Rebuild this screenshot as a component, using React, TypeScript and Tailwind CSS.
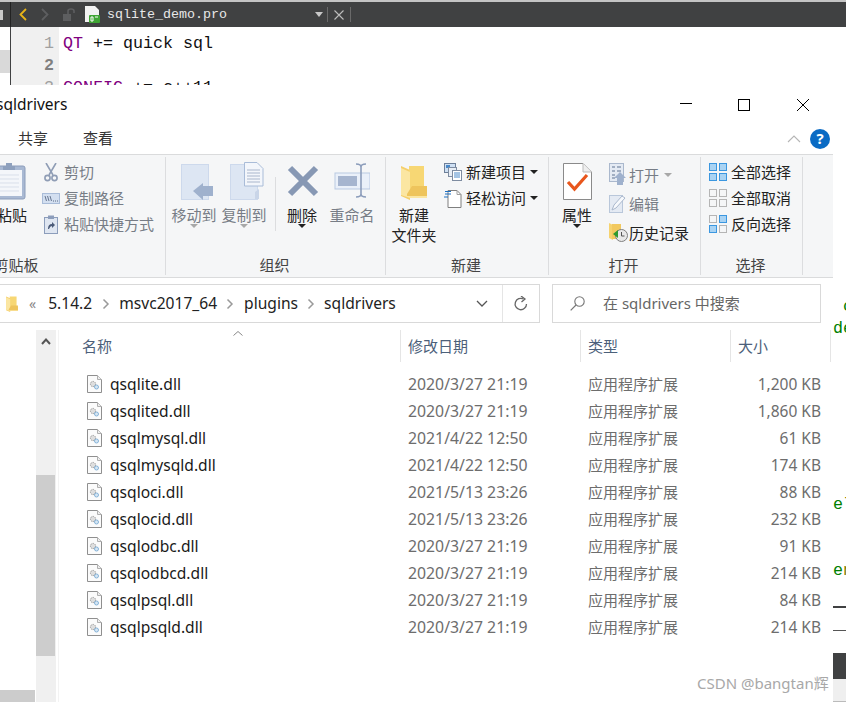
import React from "react";

const UI = "font-['Noto_Sans','Noto_Sans_CJK_SC',sans-serif]";
const MONO = "font-['Liberation_Mono','DejaVu_Sans_Mono',monospace]";

const Folder = ({ w = 26, h = 35 }: { w?: number; h?: number }) => (
  <svg width={w} height={h} viewBox="0 0 26 35">
    <path d="M0 1 L9 5 V35 L0 31Z" fill="#f5cf6b" />
    <path d="M8 1 H23 V24 H26 V32 H8Z" fill="#f7d774" />
    <path d="M0 3 L9 7 V31 H26 V33 H9 L0 30Z" fill="#fbe6a2" />
    <path d="M6 29 L11 21 H26 V31 H6Z" fill="#eec45c" />
  </svg>
);

const Clipboard = () => (
  <svg width="34" height="38" viewBox="0 0 34 38" className="mr-[6px]">
    <rect x="1" y="4" width="32" height="33" rx="2" fill="#a9b9d3" stroke="#8c9dbb" />
    <rect x="4" y="8" width="26" height="26" fill="#f4f6fa" />
    <path d="M7 13H27M7 17H27M7 21H27M7 25H27M7 29H27" stroke="#d9dfea" />
    <path d="M11 8 V4 H14 V1 H20 V4 H23 V8Z" fill="#8ea0bd" />
  </svg>
);

const Scissors = () => (
  <svg width="14" height="19" viewBox="0 0 14 19" fill="none" stroke="#8f9db5" strokeWidth="1.6" className="ml-[2px]">
    <path d="M2 0 L9 12 M12 0 L5 12" />
    <circle cx="3.5" cy="15" r="2.6" />
    <circle cx="10.5" cy="15" r="2.6" />
  </svg>
);

const PathIcon = () => (
  <svg width="18" height="11" viewBox="0 0 18 11">
    <rect x="0.5" y="0.5" width="17" height="10" fill="#d3dff0" stroke="#a9bcd8" />
    <path d="M3 3 L4.5 8 M5.5 3 L7 8 M8 3 L9.5 8" stroke="#5a6a84" strokeWidth="0.9" />
    <path d="M11 8H12M13 8H14M15 8H16" stroke="#5a6a84" />
  </svg>
);

const ShortcutIcon = () => (
  <svg width="14" height="19" viewBox="0 0 14 19" className="ml-[2px]">
    <rect x="0.5" y="2.5" width="13" height="16" fill="#dfe6f1" stroke="#8c9dbb" />
    <path d="M4 0.5H10V4H4Z" fill="#8c9dbb" />
    <path d="M4 14 Q4 9 8 9 V7 L11 10 L8 13 V11 Q6 11 5 14Z" fill="#4a5a78" />
  </svg>
);

const MoveIcon = () => (
  <svg width="32" height="36" viewBox="0 0 32 36" className="ml-[6px]">
    <rect x="0.5" y="0.5" width="27" height="35" fill="#dde6f3" stroke="#cdd9ec" />
    <path d="M12 27 L22 19 V22 H32 V32 H22 V36Z" fill="#9fb1cd" />
  </svg>
);

const CopyIcon = () => (
  <svg width="34" height="38" viewBox="0 0 34 38" className="ml-[6px]">
    <rect x="0.5" y="2.5" width="27" height="35" fill="#dde6f3" stroke="#cdd9ec" />
    <path d="M14.5 0.5 H27 L33 6.5 V24 H14.5Z" fill="#f3f6fb" stroke="#a9bcd8" />
    <path d="M17 8H30M17 11H30M17 14H30M17 17H30M17 20H30" stroke="#a9b6cc" />
    <path d="M25 30 V37 H29 V27Z" fill="#c9d5e8" />
  </svg>
);

const DeleteIcon = () => (
  <svg width="32" height="32" viewBox="0 0 32 32" className="mb-[3px] ml-[2px]">
    <path d="M3 3 L29 29 M29 3 L3 29" stroke="#8798b4" strokeWidth="6" />
  </svg>
);

const RenameIcon = () => (
  <svg width="36" height="35" viewBox="0 0 36 35" className="mb-[2px]">
    <rect x="1" y="10" width="35" height="16" fill="#eaf0f9" stroke="#b9c9e2" />
    <rect x="4" y="13" width="19" height="10" fill="#a6b5cf" />
    <path d="M22 1 Q27 1 27 4 V31 Q27 34 32 34 M32 1 Q27 1 27 4 M27 31 Q27 34 22 34" stroke="#8c9dbb" strokeWidth="1.6" fill="none" />
  </svg>
);

const NewItemIcon = () => (
  <svg width="18" height="18" viewBox="0 0 18 18">
    <rect x="0.5" y="0.5" width="11" height="9" fill="#cfe0f3" stroke="#6d7f99" />
    <rect x="2" y="2" width="4" height="3" fill="#4a89c9" />
    <rect x="4.5" y="4.5" width="8" height="9" fill="#e8eef6" stroke="#7e8ca1" />
    <rect x="8.5" y="7.5" width="9" height="10" fill="#fff" stroke="#7e8ca1" />
    <path d="M10 10H16M10 12H16M10 14H16" stroke="#4a89c9" />
  </svg>
);

const EasyIcon = () => (
  <svg width="18" height="19" viewBox="0 0 18 19">
    <path d="M4 1.5 H13 L17 5.5 V18.5 H4Z" fill="#fff" stroke="#7f7f7f" />
    <path d="M13 1.5 V5.5 H17" fill="none" stroke="#a0a0a0" />
    <path d="M0 8H4M1 5H7M1 2.5H7" stroke="#1b6fc2" strokeWidth="1.2" />
  </svg>
);

const PropsIcon = () => (
  <svg width="29" height="37" viewBox="0 0 29 37">
    <path d="M0.5 0.5 H20 L28.5 9 V36.5 H0.5Z" fill="#fff" stroke="#8a8a8a" />
    <path d="M20 0.5 V9 H28.5" fill="#eee" stroke="#bbb" />
    <path d="M5 19 L11.5 26 L24 12" fill="none" stroke="#e8561c" strokeWidth="3.2" />
  </svg>
);

const OpenIcon = () => (
  <svg width="17" height="23" viewBox="0 0 17 23">
    <rect x="0.5" y="0.5" width="14" height="18" fill="#e4eaf3" stroke="#aab8cd" />
    <path d="M3 4H6M8 4H12M3 8H6M8 8H12M3 12H6M3 15H6" stroke="#8b9ab2" strokeWidth="1.6" />
    <path d="M11 9 L17 15 H14 V22 H8 V15 H5Z" fill="#9fb1cd" />
  </svg>
);

const EditIcon = () => (
  <svg width="17" height="18" viewBox="0 0 17 18">
    <rect x="0.5" y="0.5" width="13" height="17" fill="#e4eaf3" stroke="#b9c7da" />
    <path d="M3 15 L5 10 L13 1 L16 3 L7 13Z" fill="#f7f9fc" stroke="#aab8cd" />
  </svg>
);

const HistoryIcon = () => (
  <svg width="19" height="19" viewBox="0 0 19 19">
    <path d="M0 0 L4 2 V17 L0 15Z" fill="#f6d36f" />
    <path d="M3 1H12V8H17V16H3Z" fill="#f2c95f" />
    <circle cx="12.5" cy="12.5" r="6" fill="#e8e8e8" stroke="#7f7f7f" />
    <path d="M12.5 9V13H15.5" stroke="#555" fill="none" />
    <path d="M4 11 L9 7 V15Z" fill="#2f9a2f" />
  </svg>
);

const SelectIcon = ({ on }: { on: boolean[] }) => (
  <div className="grid h-[18px] w-[18px] grid-cols-2 gap-[2px]">
    {on.map((v, i) => (
      <div key={i} className={v ? "border border-[#3b97e0] bg-[#a9d3f3]" : "border border-[#b5b5b5] bg-[#f5f6f7]"} />
    ))}
  </div>
);

const Caret = ({ light }: { light?: boolean }) => (
  <svg width="8" height="4" viewBox="0 0 8 4">
    <path d="M0 0H8L4 4Z" fill={light ? "#a8a8a8" : "#222"} />
  </svg>
);

const Big = ({
  icon, lines, w, dim, caret, className = "",
}: {
  icon: React.ReactNode; lines: string[]; w: number; dim?: boolean; caret?: "dark" | "light"; className?: string;
}) => (
  <div className={`flex flex-col items-center ${className}`} style={{ width: w }}>
    <div className="flex h-[48px] items-end justify-center pb-[5px]">{icon}</div>
    {lines.map((l) => (
      <div key={l} className={`h-[20px] whitespace-nowrap text-[15px] leading-[20px] ${dim ? "text-[#777d86]" : "text-[#222]"}`}>{l}</div>
    ))}
    {caret && <div className="mt-[-1px]"><Caret light={caret === "light"} /></div>}
  </div>
);

const Small = ({
  icon, text, dim, caret, h = 26, iw = 22, cm = "ml-[4px]",
}: { icon: React.ReactNode; text: string; dim?: boolean; caret?: "dark" | "light"; h?: number; iw?: number; cm?: string }) => (
  <div className="flex items-center" style={{ height: h }}>
    <div className="flex shrink-0 justify-start" style={{ width: iw }}>{icon}</div>
    <span className={`whitespace-nowrap text-[15px] leading-[20px] ${dim ? "text-[#777d86]" : "text-[#222]"}`}>{text}</span>
    {caret && <div className={cm}><Caret light={caret === "light"} /></div>}
  </div>
);

const Group = ({ w, label, children, labelClass = "" }: { w: number; label: string; children: React.ReactNode; labelClass?: string }) => (
  <div className="flex h-[118px] shrink-0 flex-col border-r border-[#dcdddf]" style={{ width: w }}>
    <div className="flex flex-1">{children}</div>
    <div className={`h-[24px] pr-[2px] text-center text-[15px] leading-[28px] whitespace-nowrap text-[#444] ${labelClass}`}>{label}</div>
  </div>
);

const DllIcon = () => (
  <svg width="15" height="18" viewBox="0 0 15 18">
    <path d="M0.5 0.5 H10.5 L14.5 4.5 V17.5 H0.5Z" fill="#fbfbfb" stroke="#8f8f8f" />
    <path d="M10.5 0.5 V4.5 H14.5" fill="#eee" stroke="#b0b0b0" />
    <circle cx="6" cy="9" r="2.6" fill="#dedede" stroke="#9c9c9c" strokeDasharray="1.5 0.8" />
    <circle cx="9.5" cy="12" r="2" fill="#d6e6f3" stroke="#86b3d8" />
  </svg>
);

const files: [string, string, string][] = [
  ["qsqlite.dll", "2020/3/27 21:19", "1,200 KB"],
  ["qsqlited.dll", "2020/3/27 21:19", "1,860 KB"],
  ["qsqlmysql.dll", "2021/4/22 12:50", "61 KB"],
  ["qsqlmysqld.dll", "2021/4/22 12:50", "174 KB"],
  ["qsqloci.dll", "2021/5/13 23:26", "88 KB"],
  ["qsqlocid.dll", "2021/5/13 23:26", "232 KB"],
  ["qsqlodbc.dll", "2020/3/27 21:19", "91 KB"],
  ["qsqlodbcd.dll", "2020/3/27 21:19", "214 KB"],
  ["qsqlpsql.dll", "2020/3/27 21:19", "84 KB"],
  ["qsqlpsqld.dll", "2020/3/27 21:19", "214 KB"],
];

const Chev = () => (
  <svg width="8" height="12" viewBox="0 0 8 12" className="shrink-0">
    <path d="M1.5 1.5 L6 6 L1.5 10.5" fill="none" stroke="#9a9a9a" strokeWidth="1.5" />
  </svg>
);

const Head = ({ w, label }: { w: number; label: string }) => (
  <div className="flex h-[32px] shrink-0 items-center border-r border-[#e5e5e5] pl-[7px] text-[15px] text-[#4c607a]" style={{ width: w }}>
    {label}
  </div>
);

export default function App() {
  return (
    <div className={`flex h-[702px] w-[846px] flex-col overflow-hidden bg-white ${UI}`}>
      {/* Qt Creator behind */}
      <div className="h-[2px] shrink-0 bg-[#c4c4c4]" />
      <div className="flex h-[25px] shrink-0 items-center bg-[#404142]">
        <div className="h-[10px] w-[3px] bg-[#c8c8c8]" />
        <div className="ml-[7px] h-full w-px bg-[#222]" />
        <svg width="8" height="13" viewBox="0 0 8 13" className="ml-[8px]"><path d="M7 1 L1.5 6.5 L7 12" fill="none" stroke="#e8b418" strokeWidth="1.8" /></svg>
        <svg width="8" height="13" viewBox="0 0 8 13" className="ml-[14px]"><path d="M1 1 L6.5 6.5 L1 12" fill="none" stroke="#5d5e60" strokeWidth="1.8" /></svg>
        <svg width="13" height="13" viewBox="0 0 13 13" className="ml-[14px]"><rect x="0" y="6" width="8" height="7" fill="#5d5e60" /><path d="M5 6 V3 Q5 1 8 1 Q11 1 11 3 V5" fill="none" stroke="#5d5e60" strokeWidth="1.6" /></svg>
        <svg width="15" height="17" viewBox="0 0 15 17" className="ml-[9px]"><path d="M0 0H10L14 4V16H0Z" fill="#f2f2f2" /><rect x="4" y="9" width="11" height="8" rx="1" fill="#3fa535" /><path d="M6 11H8V15H6ZM10 11H13" stroke="#fff" fill="none" /></svg>
        <span className={`ml-[7px] w-[208px] text-[13.33px] text-[#e8e8e8] ${MONO}`}>sqlite_demo.pro</span>
        <svg width="8" height="5" viewBox="0 0 8 5"><path d="M0 0H8L4 5Z" fill="#c8c8c8" /></svg>
        <div className="ml-[4px] h-[15px] w-px bg-[#6a6a6a]" />
        <svg width="10" height="10" viewBox="0 0 10 10" className="ml-[6px]"><path d="M0.5 0.5 L9.5 9.5 M9.5 0.5 L0.5 9.5" stroke="#bdbdbd" strokeWidth="1.1" /></svg>
        <div className="ml-[6px] h-[15px] w-px bg-[#6a6a6a]" />
      </div>
      <div className={`flex h-[58px] shrink-0 overflow-hidden ${MONO}`}>
        <div className="w-[10px] shrink-0 pt-[23px]"><div className="h-[23px] bg-[#d9d9d9]" /></div>
        <div className="flex w-[49px] shrink-0 flex-col border-l border-[#404142] bg-[#f0f0f0] pr-[5px] pt-[6px] text-right text-[16.67px] leading-[22px]">
          <div className="text-[#a0a0a0]">1</div>
          <div className="font-bold text-[#808080]">2</div>
          <div className="text-[#a0a0a0]">3</div>
        </div>
        <div className="pl-[4px] pt-[6px] text-[16.67px] leading-[22px] whitespace-pre text-[#111]">
          <div><span className="text-[#800080]">QT</span> += quick sql</div>
          <div>&nbsp;</div>
          <div><span className="text-[#800080]">CONFIG</span> += c++11</div>
        </div>
      </div>

      <div className="flex min-h-0 flex-1">
        {/* Explorer window */}
        <div className="flex w-[833px] shrink-0 flex-col overflow-hidden bg-white">
          <div className="flex h-[40px] shrink-0 items-center">
            <span className="-ml-[4px] text-[15.5px] text-[#111]">sqldrivers</span>
            <div className="ml-auto flex items-center pr-[24px]">
              <div className="mb-[4px] h-px w-[12px] bg-black" />
              <div className="ml-[46px] mb-[1px] h-[12px] w-[12px] border border-black" />
              <svg width="12" height="12" viewBox="0 0 12 12" className="ml-[47px] mb-[1px]"><path d="M0 0 L12 12 M12 0 L0 12" stroke="#000" strokeWidth="1" /></svg>
            </div>
          </div>
          <div className="flex h-[29px] shrink-0 items-center pb-[2px] text-[15px] text-[#333]">
            <span className="ml-[18px]">共享</span>
            <span className="ml-[35px]">查看</span>
            <svg width="14" height="8" viewBox="0 0 14 8" className="ml-auto"><path d="M1 7 L7 1 L13 7" fill="none" stroke="#b5b5b5" strokeWidth="1.1" /></svg>
            <div className="ml-[9px] mr-[3px] flex h-[20px] w-[20px] items-center justify-center rounded-full bg-[#0a6bc4] text-[15px] font-bold leading-none text-white">?</div>
          </div>

          {/* Ribbon */}
          <div className="flex h-[124px] shrink-0 border-y border-[#dadbdc] bg-[#f5f6f7] pt-[2px]">
            <Group w={166} label="剪贴板" labelClass="-ml-[131px]">
              <Big className="-ml-[16px] shrink-0" w={56} icon={<Clipboard />} lines={["粘贴"]} />
              <div className="ml-[2px] flex flex-col pt-[2px]">
                <Small icon={<Scissors />} text="剪切" dim />
                <Small icon={<PathIcon />} text="复制路径" dim />
                <Small icon={<ShortcutIcon />} text="粘贴快捷方式" dim />
              </div>
            </Group>
            <Group w={220} label="组织">
              <div className="flex pl-[3px]">
                <Big w={50} icon={<MoveIcon />} lines={["移动到"]} dim caret="light" />
                <Big w={50} icon={<CopyIcon />} lines={["复制到"]} dim caret="light" />
                <div className="ml-[6px] mt-[20px] h-[54px] w-px bg-[#dcdddf]" />
                <Big className="ml-[6px]" w={40} icon={<DeleteIcon />} lines={["删除"]} caret="dark" />
                <Big className="ml-[5px]" w={50} icon={<RenameIcon />} lines={["重命名"]} dim />
              </div>
            </Group>
            <Group w={163} label="新建">
              <Big className="ml-[2px]" w={52} icon={<Folder />} lines={["新建", "文件夹"]} />
              <div className="ml-[4px] flex flex-col pt-[2px]">
                <Small icon={<NewItemIcon />} text="新建项目" caret="dark" />
                <Small icon={<EasyIcon />} text="轻松访问" caret="dark" />
              </div>
            </Group>
            <Group w={152} label="打开">
              <Big className="ml-[4px]" w={48} icon={<PropsIcon />} lines={["属性"]} caret="dark" />
              <div className="ml-[8px] flex flex-col pt-[3px]">
                <Small h={29} iw={20} icon={<OpenIcon />} text="打开" dim caret="light" cm="ml-[5px]" />
                <Small h={29} iw={20} icon={<EditIcon />} text="编辑" dim />
                <Small h={29} iw={20} icon={<HistoryIcon />} text="历史记录" />
              </div>
            </Group>
            <Group w={102} label="选择">
              <div className="ml-[8px] flex flex-col pt-[2px]">
                <Small icon={<SelectIcon on={[true, true, true, true]} />} text="全部选择" />
                <Small icon={<SelectIcon on={[false, false, false, false]} />} text="全部取消" />
                <Small icon={<SelectIcon on={[false, true, true, false]} />} text="反向选择" />
              </div>
            </Group>
          </div>

          {/* Address row */}
          <div className="mt-[6px] flex h-[39px] shrink-0">
            <div className="flex w-[540px] shrink-0 items-center border border-l-0 border-[#d9d9d9] text-[15.6px] text-[#222]">
              <div className="ml-[6px]"><Folder w={12} h={16} /></div>
              <span className="ml-[11px] text-[14px] text-[#888]">«</span>
              <span className="ml-[12px]">5.14.2</span>
              <div className="ml-[10px]"><Chev /></div>
              <span className="ml-[9px]">msvc2017_64</span>
              <div className="ml-[9px]"><Chev /></div>
              <span className="ml-[10px]">plugins</span>
              <div className="ml-[9px]"><Chev /></div>
              <span className="ml-[9px]">sqldrivers</span>
              <svg width="12" height="7" viewBox="0 0 12 7" className="ml-auto"><path d="M1 1 L6 6 L11 1" fill="none" stroke="#555" strokeWidth="1.3" /></svg>
              <div className="ml-[14px] h-full w-px bg-[#e5e5e5]" />
              <svg width="16" height="16" viewBox="0 0 16 16" className="ml-[10px] mr-[10px]"><path d="M13.5 8 A5.7 5.7 0 1 1 10.5 3" fill="none" stroke="#666" strokeWidth="1.3" /><path d="M8 0 L12 3 L8.5 6" fill="none" stroke="#666" strokeWidth="1.3" /></svg>
            </div>
            <div className="ml-[12px] flex w-[269px] shrink-0 items-center border border-[#d9d9d9] text-[15px] text-[#666]">
              <svg width="15" height="15" viewBox="0 0 15 15" className="ml-[17px]"><circle cx="9.5" cy="5.5" r="4.7" fill="none" stroke="#777" strokeWidth="1.1" /><path d="M6 9 L0.7 14.3" stroke="#777" strokeWidth="1.2" /></svg>
              <span className="ml-[18px]">在 sqldrivers 中搜索</span>
            </div>
          </div>

          {/* Content */}
          <div className="mt-[7px] flex min-h-0 flex-1">
            <div className="flex w-[59px] shrink-0 border-r border-[#f3f3f3]">
              <div className="flex w-[36px] shrink-0 flex-col justify-end">
                <div className="h-[12px] w-[35px] bg-[#cccccc]" />
              </div>
              <div className="flex w-[20px] shrink-0 flex-col bg-[#f0f0f0]">
                <div className="flex h-[22px] items-center justify-center">
                  <svg width="10" height="7" viewBox="0 0 10 7"><path d="M1 6 L5 1.5 L9 6" fill="none" stroke="#555" strokeWidth="2" /></svg>
                </div>
                <div className="mt-[123px] h-[181px] w-[19px] bg-[#cdcdcd]" />
              </div>
            </div>
            <div className="min-w-0 flex-1">
              <div className="flex h-[32px]">
                <div className="relative flex w-[342px] shrink-0 items-center border-r border-[#e5e5e5] pl-[23px] text-[15px] text-[#4c607a]">
                  名称
                  <svg width="10" height="5" viewBox="0 0 10 5" className="absolute left-[174px] top-[1px]"><path d="M0.5 4.5 L5 0.5 L9.5 4.5" fill="none" stroke="#888" /></svg>
                </div>
                <Head w={180} label="修改日期" />
                <Head w={150} label="类型" />
                <Head w={100} label="大小" />
              </div>
              <div className="mt-[9px] flex flex-col">
                {files.map(([name, date, size]) => (
                  <div key={name} className="flex h-[27px] items-center text-[15px]">
                    <div className="flex w-[342px] shrink-0 items-center pl-[28px] text-[15.6px] text-[#1a1a1a]">
                      <DllIcon />
                      <span className="ml-[8px]">{name}</span>
                    </div>
                    <div className="w-[180px] shrink-0 pl-[7px] text-[15.8px] text-[#6d6d6d]">{date}</div>
                    <div className="w-[142px] shrink-0 pl-[7px] text-[#6d6d6d]">应用程序扩展</div>
                    <div className="w-[98px] shrink-0 text-right text-[15.5px] text-[#6d6d6d]">{size}</div>
                  </div>
                ))}
              </div>
            </div>
          </div>
        </div>

        {/* Editor remainder at the right */}
        <div className={`flex w-[13px] shrink-0 flex-col overflow-hidden whitespace-pre text-[16.67px] leading-[22px] ${MONO}`}>
          <div className="mt-[211px] h-[22px] text-[#008000]"> c</div>
          <div className="h-[22px] text-[#008000]">de</div>
          <div className="mt-[154px] h-[22px] text-[#008000]">e<span className="text-[#808000]">l</span></div>
          <div className="mt-[44px] h-[22px] text-[#008000]">e<span className="text-[#808000]">n</span></div>
          <div className="mt-[24px] h-[2px] bg-[#404142]" />
          <div className="mt-[22px] h-px bg-[#555]" />
          <div className="mt-[22px] h-[26px] bg-[#404142]" />
          <div className="h-[23px] border-b border-[#bbb] bg-[#efefef]" />
        </div>
      </div>

      <div className="absolute left-[697px] top-[673px] text-[15px] leading-[20px] text-[#a8a8a8]">CSDN @bangtan辉</div>
    </div>
  );
}
